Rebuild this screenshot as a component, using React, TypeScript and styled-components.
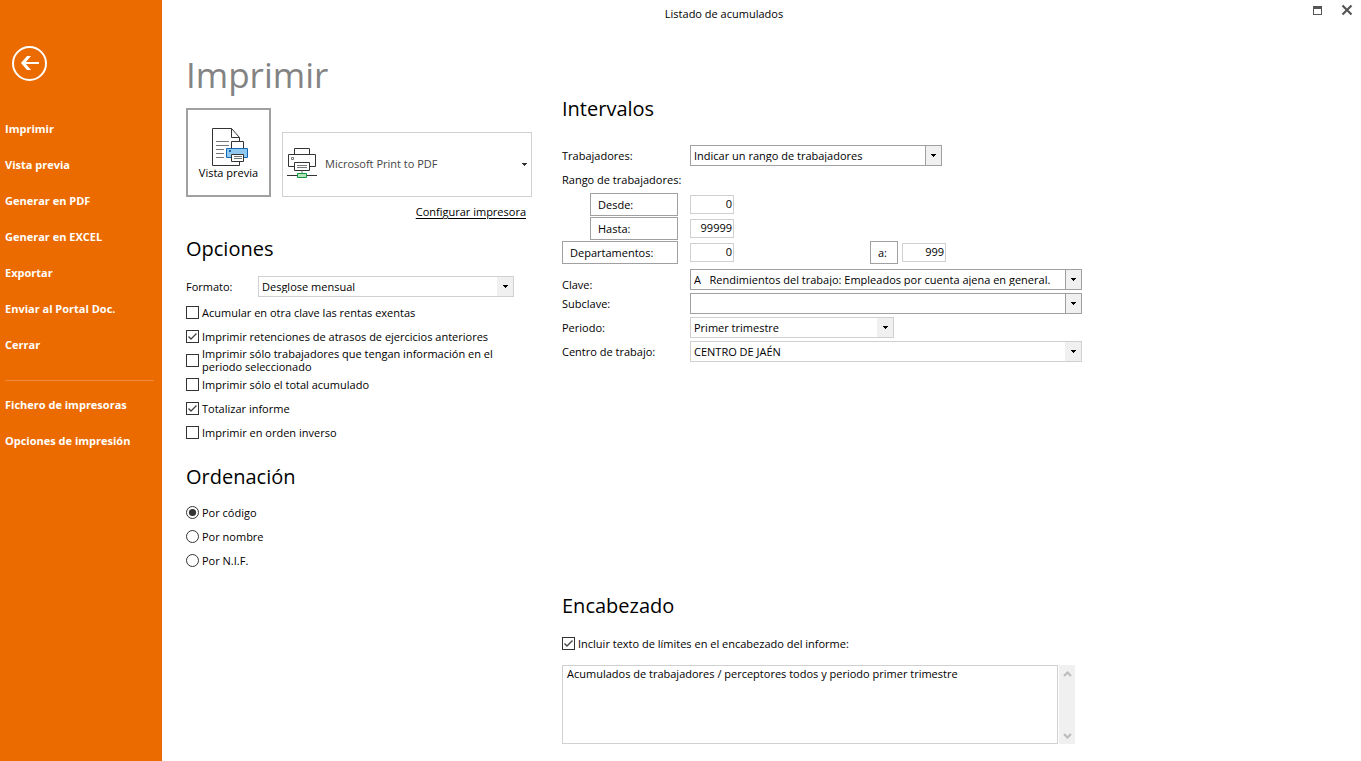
import React, { useId, useState } from "react";
import styled, { createGlobalStyle } from "styled-components";

const GlobalStyle = createGlobalStyle`
  *, *::before, *::after { box-sizing: border-box; }
  body {
    margin: 0;
    background: #fff;
    color: #000;
    font: 11px/13px "Open Sans", "Noto Sans", "Segoe UI", sans-serif;
  }
  button, input, select, textarea { font: inherit; color: inherit; margin: 0; }
`;

const Page = styled.div`
  display: flex;
  min-height: 100vh;
`;

const Sidebar = styled.nav`
  flex: 0 0 162px;
  padding: 46px 8px 24px 5px;
  background: #eb6b00;
  color: #fff;
`;

const BackButton = styled.button`
  display: block;
  width: 35px;
  height: 35px;
  margin: 0 0 30px 7px;
  padding: 0;
  border: 0;
  background: none;
  cursor: pointer;
`;

const NavLink = styled.a`
  display: block;
  color: #fff;
  font-weight: 700;
  line-height: 36px;
  text-decoration: none;
  white-space: nowrap;
`;

const NavDivider = styled.hr`
  height: 1px;
  margin: 17px 0 6px;
  border: 0;
  background: #f08a3c;
`;

const Main = styled.main`
  display: flex;
  flex: 1;
  flex-direction: column;
  min-width: 0;
`;

const TitleBar = styled.header`
  display: flex;
  height: 28px;
`;

const WindowTitle = styled.div`
  flex: 1;
  padding-top: 7px;
  text-align: center;
`;

const WindowControls = styled.div`
  display: flex;
  gap: 12px;
  width: 75px;
  height: 28px;
  padding-left: 22px;
`;

const WindowButton = styled.button`
  width: 18px;
  height: 20px;
  padding: 0;
  border: 0;
  background: none;
`;

const Columns = styled.div`
  display: grid;
  flex: 1;
  grid-template-columns: 346px minmax(0, 1fr);
  column-gap: 30px;
  padding: 0 24px 17px;
`;

const Column = styled.div`
  display: flex;
  flex-direction: column;
`;

const RightColumn = styled(Column)`
  justify-content: space-between;
  gap: 24px;
  padding-top: 65px;
`;

const PageHeading = styled.h1`
  margin: 23px 0 9px;
  color: #838383;
  font-size: 35px;
  font-weight: 400;
  line-height: 48px;
`;

const Heading = styled.h2<{ $gap: number }>`
  margin: 0 0 ${(p) => p.$gap}px;
  font-size: 20px;
  font-weight: 400;
  line-height: 32px;
`;

const PrinterRow = styled.div`
  display: flex;
  align-items: flex-end;
  gap: 11px;
`;

const PreviewButton = styled.button`
  display: flex;
  flex-direction: column;
  align-items: center;
  width: 85px;
  height: 89px;
  padding: 18px 0 0;
  border: 2px solid #a0a0a0;
  background: #fff;
  line-height: 14px;
  white-space: nowrap;
`;

const PrinterBox = styled.div`
  position: relative;
  flex: 1;
  height: 65px;
`;

const PrinterSelect = styled.select`
  width: 100%;
  height: 100%;
  padding: 0 20px 2px 42px;
  border: 1px solid #d0d0d0;
  border-radius: 0;
  background: #fff;
  color: #444;
  appearance: none;
`;

const PrinterIconSlot = styled.span`
  position: absolute;
  left: 5px;
  top: 16px;
  pointer-events: none;
`;

const PrinterArrow = styled.svg`
  position: absolute;
  right: 5px;
  top: 31px;
  pointer-events: none;
`;

const ConfigLink = styled.a`
  align-self: flex-end;
  margin: 7px 6px 13px 0;
  color: #000;
  line-height: 16px;
  text-underline-offset: 2px;
`;

const FormatRow = styled.div`
  display: flex;
  align-items: center;
  height: 21px;
  margin-bottom: 3px;
`;

const FormatLabel = styled.label`
  width: 72px;
`;

const SelectBox = styled.div<{ $width: number; $strong?: boolean }>`
  position: relative;
  width: ${(p) => p.$width}px;
  height: 21px;

  select {
    display: block;
    width: 100%;
    height: 100%;
    padding: 0 20px 0 3px;
    border: 1px solid ${(p) => (p.$strong ? "#a0a0a0" : "#d0d0d0")};
    border-radius: 0;
    background: #fff;
    appearance: none;
  }
`;

const SelectArrow = styled.span<{ $strong?: boolean }>`
  position: absolute;
  top: 1px;
  right: 1px;
  bottom: 1px;
  display: flex;
  align-items: center;
  justify-content: center;
  width: 16px;
  border-left: ${(p) => (p.$strong ? "1px solid #a0a0a0" : "0")};
  background: #f0f0f0;
  pointer-events: none;
`;

const CheckRow = styled.label`
  display: flex;
  align-items: center;
  gap: 3px;
  height: 24px;
`;

const MarkBox = styled.span`
  position: relative;
  flex: 0 0 13px;
  height: 13px;

  input {
    display: block;
    width: 13px;
    height: 13px;
    border: 1px solid #333;
    background: #fff;
    appearance: none;
  }
  input[type="radio"] { border-radius: 50%; }
  svg {
    position: absolute;
    inset: 0;
    pointer-events: none;
    visibility: hidden;
  }
  input:checked + svg { visibility: visible; }
`;

const OrderSection = styled.section`
  margin-top: 17px;
`;

const FieldRow = styled.div`
  display: grid;
  grid-template-columns: 116px 12px minmax(0, 1fr);
  align-items: center;
  height: 24px;
`;

const FieldLabel = styled.label<{ $low?: boolean }>`
  grid-column: 1 / 3;
  align-self: ${(p) => (p.$low ? "end" : "center")};
  white-space: nowrap;
`;

const FieldControls = styled.div`
  grid-column: 3;
  display: flex;
  align-items: center;
`;

const FieldGroup = styled.div<{ $gap: number }>`
  margin-top: ${(p) => p.$gap}px;
`;

const RangeButton = styled.button<{ $width: number }>`
  justify-self: end;
  width: ${(p) => p.$width}px;
  height: 23px;
  padding: 0 7px;
  border: 1px solid #a0a0a0;
  background: #fff;
  text-align: left;
`;

const NumberInput = styled.input`
  width: 44px;
  height: 19px;
  padding: 0 1px 1px;
  border: 1px solid #d0d0d0;
  border-radius: 0;
  background: #fff;
  text-align: right;
`;

const UpperLimit = styled.div`
  display: flex;
  align-items: center;
  gap: 4px;
  margin-left: 136px;
`;

const TextRow = styled.div`
  display: flex;
  gap: 1px;
  width: 513px;
  max-width: 100%;
  height: 79px;
  margin-top: 10px;
`;

const HeaderText = styled.textarea`
  flex: 1;
  min-width: 0;
  padding: 1px 4px;
  border: 1px solid #d0d0d0;
  border-radius: 0;
  resize: none;
  overflow: hidden;
`;

const ScrollTrack = styled.div`
  display: flex;
  flex-direction: column;
  justify-content: space-between;
  width: 16px;
  background: #f0f0f0;
`;

const ScrollButton = styled.button`
  display: flex;
  align-items: center;
  justify-content: center;
  width: 16px;
  height: 17px;
  padding: 0;
  border: 0;
  background: none;
`;

function DownMark() {
  return (
    <svg width="5" height="3" viewBox="0 0 5 3" shapeRendering="crispEdges">
      <path d="M0 0h5v1H4v1H3v1H2V2H1V1H0z" fill="#000" />
    </svg>
  );
}

function PreviewIcon() {
  return (
    <svg width="41" height="38" viewBox="-4 0 41 38" fill="none">
      <path d="M19.500 .5H.5v37h27v-28z" fill="#fff" />
      <path d="M27.500 14V9.500L19.500 .5H.5v37h27V34" stroke="#333" />
      <path d="M19.500 .5v9h8" stroke="#333" />
      <path d="M4 13.500h13M4 17.500h13M4 21.500h8M4 25.500h8M4 29.500h8" stroke="#777" />
      <path d="M19.500 20v-6.500h12V20" fill="#fff" stroke="#333" />
      <path d="M14.500 20.500h21v9h-21z" fill="#91c8f0" stroke="#1468b3" />
      <path d="M17 22h2v2h-2z" fill="#1468b3" />
      <path d="M19.500 26.500h12v7h-12z" fill="#fff" stroke="#333" />
      <path d="M22 28.500h8M22 30.500h8" stroke="#777" />
    </svg>
  );
}

function PrinterIcon() {
  return (
    <svg width="30" height="31" viewBox="0 0 30 31" fill="none">
      <path d="M7.500 7V.5h15V7" fill="#fff" stroke="#333" />
      <path d="M7.500 18.500h-6v-12h27v12h-6" fill="#fff" stroke="#333" />
      <path d="M4.500 9.500h2v2h-2z" stroke="#777" />
      <path d="M7.500 14.500h15v8h-15z" fill="#fff" stroke="#333" />
      <path d="M10 17.500h10M10 19.500h10" stroke="#777" />
      <path d="M15 23v2" stroke="#bbb" strokeWidth="2" />
      <path d="M0 27.500h10M20 27.500h10" stroke="#333" />
      <path d="M10.500 25.500h9v4h-9z" fill="#b5e3bf" stroke="#0f9a3c" />
    </svg>
  );
}

function Check({ label, checked = false }: { label: string; checked?: boolean }) {
  return (
    <CheckRow>
      <MarkBox>
        <input type="checkbox" defaultChecked={checked} />
        <svg width="13" height="13" viewBox="0 0 13 13">
          <path d="M2.500 6.500L5 9l5.500-5.500" fill="none" stroke="#444" strokeWidth="1.400" />
        </svg>
      </MarkBox>
      <span>{label}</span>
    </CheckRow>
  );
}

function Radio({ label, checked = false }: { label: string; checked?: boolean }) {
  return (
    <CheckRow>
      <MarkBox>
        <input type="radio" name="orden" defaultChecked={checked} />
        <svg width="13" height="13" viewBox="0 0 13 13">
          <circle cx="6.500" cy="6.500" r="3.600" fill="#333" />
        </svg>
      </MarkBox>
      <span>{label}</span>
    </CheckRow>
  );
}

interface DropDownProps {
  id: string;
  value: string;
  width: number;
  strong?: boolean;
}

function DropDown({ id, value, width, strong }: DropDownProps) {
  return (
    <SelectBox $width={width} $strong={strong}>
      <select id={id}>
        <option>{value}</option>
      </select>
      <SelectArrow $strong={strong}>
        <DownMark />
      </SelectArrow>
    </SelectBox>
  );
}

interface SelectFieldProps extends Omit<DropDownProps, "id"> {
  label: string;
  lowLabel?: boolean;
}

function SelectField({ label, value, width, strong, lowLabel }: SelectFieldProps) {
  const id = useId();
  return (
    <FieldRow>
      <FieldLabel htmlFor={id} $low={lowLabel}>{label}</FieldLabel>
      <FieldControls>
        <DropDown id={id} value={value} width={width} strong={strong} />
      </FieldControls>
    </FieldRow>
  );
}

const actions = [
  "Imprimir",
  "Vista previa",
  "Generar en PDF",
  "Generar en EXCEL",
  "Exportar",
  "Enviar al Portal Doc.",
  "Cerrar",
];

const settings = ["Fichero de impresoras", "Opciones de impresión"];

export default function App() {
  const [text, setText] = useState(
    "Acumulados de trabajadores / perceptores todos y periodo primer trimestre"
  );

  return (
    <>
      <GlobalStyle />
      <Page>
        <Sidebar>
          <BackButton aria-label="Volver">
            <svg width="35" height="35" viewBox="0 0 35 35" fill="none" stroke="#fff">
              <circle cx="17.500" cy="17.500" r="16.500" strokeWidth="2" />
              <path d="M11 17H27" strokeWidth="2" />
              <path d="M19 10h-4l-6 7 6 7h4l-6-7z" fill="#fff" stroke="none" />
            </svg>
          </BackButton>
          {actions.map((name) => (
            <NavLink href="#" key={name}>{name}</NavLink>
          ))}
          <NavDivider />
          {settings.map((name) => (
            <NavLink href="#" key={name}>{name}</NavLink>
          ))}
        </Sidebar>

        <Main>
          <TitleBar>
            <WindowTitle>Listado de acumulados</WindowTitle>
            <WindowControls>
              <WindowButton aria-label="Maximizar">
                <svg width="18" height="20" viewBox="0 0 18 20" shapeRendering="crispEdges">
                  <path d="M5 6h9v9H5zM6 9v5h7V9z" fill="#555" fillRule="evenodd" />
                </svg>
              </WindowButton>
              <WindowButton aria-label="Cerrar ventana">
                <svg width="18" height="20" viewBox="0 0 18 20">
                  <path d="M4.500 5.500l9 9M13.500 5.500l-9 9" stroke="#555" strokeWidth="2.200" />
                </svg>
              </WindowButton>
            </WindowControls>
          </TitleBar>

          <Columns>
            <Column>
              <PageHeading>Imprimir</PageHeading>
              <PrinterRow>
                <PreviewButton>
                  <PreviewIcon />
                  Vista previa
                </PreviewButton>
                <PrinterBox>
                  <PrinterSelect aria-label="Impresora">
                    <option>Microsoft Print to PDF</option>
                  </PrinterSelect>
                  <PrinterIconSlot>
                    <PrinterIcon />
                  </PrinterIconSlot>
                  <PrinterArrow width="5" height="3" viewBox="0 0 5 3" shapeRendering="crispEdges">
                    <path d="M0 0h5v1H4v1H3v1H2V2H1V1H0z" fill="#333" />
                  </PrinterArrow>
                </PrinterBox>
              </PrinterRow>
              <ConfigLink href="#">Configurar impresora</ConfigLink>

              <section>
                <Heading $gap={11}>Opciones</Heading>
                <FormatRow>
                  <FormatLabel htmlFor="formato">Formato:</FormatLabel>
                  <DropDown id="formato" value="Desglose mensual" width={256} />
                </FormatRow>
                <Check label="Acumular en otra clave las rentas exentas" />
                <Check label="Imprimir retenciones de atrasos de ejercicios anteriores" checked />
                <Check label="Imprimir sólo trabajadores que tengan información en el periodo seleccionado" />
                <Check label="Imprimir sólo el total acumulado" />
                <Check label="Totalizar informe" checked />
                <Check label="Imprimir en orden inverso" />
              </section>

              <OrderSection>
                <Heading $gap={7}>Ordenación</Heading>
                <Radio label="Por código" checked />
                <Radio label="Por nombre" />
                <Radio label="Por N.I.F." />
              </OrderSection>
            </Column>

            <RightColumn>
              <section>
                <Heading $gap={18}>Intervalos</Heading>
                <SelectField label="Trabajadores:" value="Indicar un rango de trabajadores" width={252} strong />
                <FieldRow>
                  <FieldLabel as="span">Rango de trabajadores:</FieldLabel>
                </FieldRow>
                <FieldGroup $gap={1}>
                  <FieldRow>
                    <RangeButton $width={88}>Desde:</RangeButton>
                    <FieldControls>
                      <NumberInput aria-label="Desde" defaultValue="0" />
                    </FieldControls>
                  </FieldRow>
                  <FieldRow>
                    <RangeButton $width={88}>Hasta:</RangeButton>
                    <FieldControls>
                      <NumberInput aria-label="Hasta" defaultValue="99999" />
                    </FieldControls>
                  </FieldRow>
                  <FieldRow>
                    <RangeButton $width={116}>Departamentos:</RangeButton>
                    <FieldControls>
                      <NumberInput aria-label="Departamento inicial" defaultValue="0" />
                      <UpperLimit>
                        <RangeButton $width={28}>a:</RangeButton>
                        <NumberInput aria-label="Departamento final" defaultValue="999" />
                      </UpperLimit>
                    </FieldControls>
                  </FieldRow>
                </FieldGroup>
                <FieldGroup $gap={3}>
                  <SelectField
                    label="Clave:"
                    value={"A\u00a0\u00a0\u00a0Rendimientos del trabajo: Empleados por cuenta ajena en general."}
                    width={392}
                    strong
                    lowLabel
                  />
                  <SelectField label="Subclave:" value="" width={392} strong />
                  <SelectField label="Periodo:" value="Primer trimestre" width={204} />
                  <SelectField label="Centro de trabajo:" value="CENTRO DE JAÉN" width={392} />
                </FieldGroup>
              </section>

              <section>
                <Heading $gap={9}>Encabezado</Heading>
                <Check label="Incluir texto de límites en el encabezado del informe:" checked />
                <TextRow>
                  <HeaderText
                    aria-label="Texto del encabezado"
                    value={text}
                    onChange={(e) => setText(e.target.value)}
                  />
                  <ScrollTrack>
                    <ScrollButton aria-label="Subir">
                      <svg width="9" height="6" viewBox="0 0 9 6">
                        <path d="M1 5l3.500-3.500L8 5" fill="none" stroke="#bbb" strokeWidth="2" />
                      </svg>
                    </ScrollButton>
                    <ScrollButton aria-label="Bajar">
                      <svg width="9" height="6" viewBox="0 0 9 6">
                        <path d="M1 1l3.500 3.500L8 1" fill="none" stroke="#bbb" strokeWidth="2" />
                      </svg>
                    </ScrollButton>
                  </ScrollTrack>
                </TextRow>
              </section>
            </RightColumn>
          </Columns>
        </Main>
      </Page>
    </>
  );
}
